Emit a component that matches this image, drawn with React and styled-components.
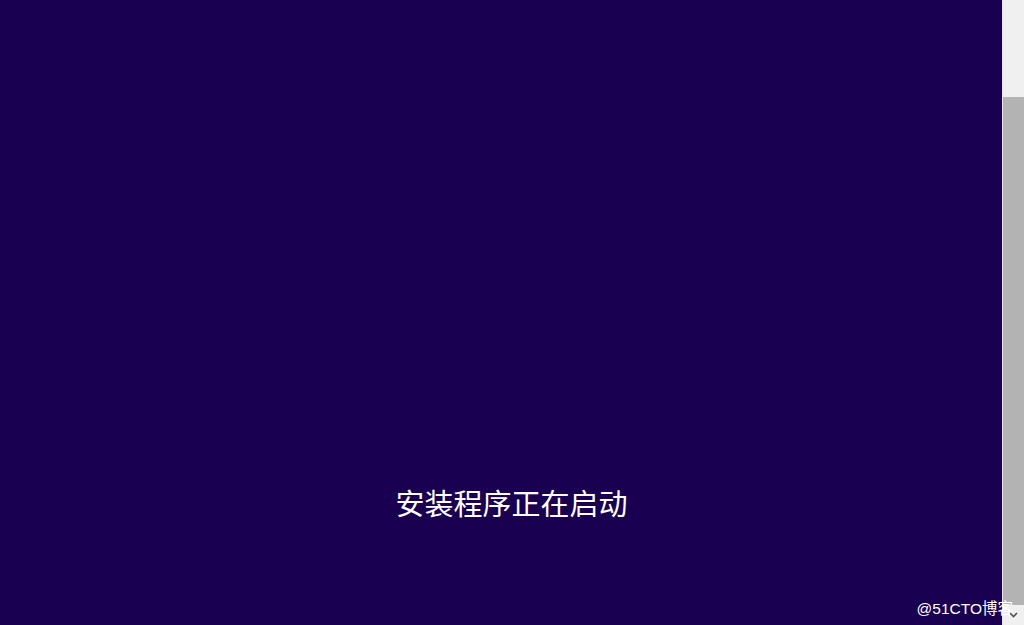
import React from "react";
import styled, { createGlobalStyle } from "styled-components";

const Global = createGlobalStyle`
  html, body {
    margin: 0;
    padding: 0;
    height: 100%;
    overflow: hidden;
  }
  #root {
    height: 100%;
  }
`;

function App() {
  return (
    <Screen>
      <Global />
      <Main>
        <Status>安装程序正在启动</Status>
      </Main>
      <Track>
        <Thumb />
        <ArrowButton>
          <svg width="9" height="6" viewBox="0 0 9 6">
            <path d="M1 1l3.5 3.5L8 1" fill="none" stroke="#505050" strokeWidth="1.6" />
          </svg>
        </ArrowButton>
      </Track>
      <Watermark>@51CTO博客</Watermark>
    </Screen>
  );
}

const Screen = styled.div`
  position: relative;
  display: flex;
  width: 1024px;
  height: 625px;
  background: #1a0050;
  font-family: "Noto Sans CJK SC", "Liberation Sans", sans-serif;
`;
const Main = styled.div`
  flex: 1;
  display: flex;
  flex-direction: column;
  justify-content: flex-end;
  align-items: center;
  padding: 0 0 108px 21px;
`;
const Status = styled.div`
  color: #ffffff;
  font-size: 29px;
  line-height: 29px;
`;
const Track = styled.div`
  width: 21px;
  display: flex;
  flex-direction: column;
  background: #f0f0f0;
  border-left: 1px solid #e6e6ee;
`;
const Thumb = styled.div`
  margin-top: 97px;
  flex: 1;
  background: #b3b3b3;
`;
const ArrowButton = styled.div`
  height: 20px;
  display: flex;
  align-items: center;
  justify-content: center;
  background: #f0f0f0;
`;
const Watermark = styled.div`
  position: absolute;
  right: 11px;
  bottom: 8px;
  color: #ffffff;
  font-family: "Liberation Sans", "Noto Sans CJK SC", sans-serif;
  font-size: 15.5px;
  line-height: 17px;
`;

export default App;
